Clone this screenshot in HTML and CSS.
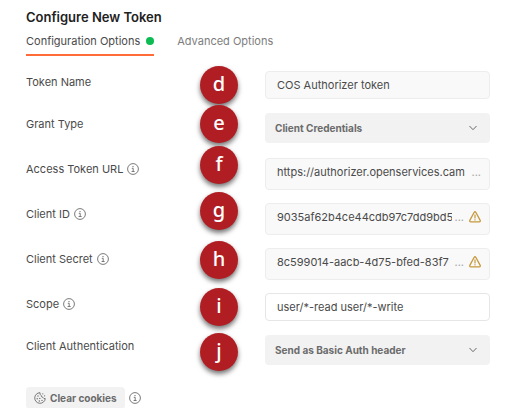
FILE: index.html
```html
<!DOCTYPE html>
<html lang="en">
<head>
  <meta charset="UTF-8" />
  <meta name="viewport" content="width=device-width, initial-scale=1" />
  <title>Configure New Token</title>
  <link rel="stylesheet" href="styles.css">
</head>
<body>
  <svg class="sprite" aria-hidden="true">
    <symbol id="info" viewBox="0 0 12 12">
      <circle cx="6" cy="6" r="5.4" fill="none" stroke="currentColor" stroke-width="0.9" />
      <path d="M4.8 5.3H6.2V8.4M4.6 8.5H7.6" fill="none" stroke="currentColor" stroke-width="0.9" />
      <circle cx="6" cy="3.6" r="0.7" fill="currentColor" />
    </symbol>
    <symbol id="warning" viewBox="0 0 12 12">
      <path d="M5.2 1.3Q6 0.2 6.8 1.3L11.2 9.4Q11.6 10.9 10.3 10.9H1.7Q0.4 10.9 0.8 9.4Z" fill="none" stroke="currentColor" stroke-width="1.3" stroke-linejoin="round" />
      <path d="M6 3.6V7.4M6 8.2V9.5" fill="none" stroke="currentColor" stroke-width="1.2" />
    </symbol>
    <symbol id="chevron" viewBox="0 0 10 6">
      <path d="M1.5 1L5 4.7L8.5 1" fill="none" stroke="currentColor" stroke-width="1" />
    </symbol>
    <symbol id="cookie" viewBox="0 0 12 12">
      <path d="M6 0.7A5.3 5.3 0 1 0 11.3 6.6Q9.7 7 9 5.4Q7.2 5.2 7.2 3.5Q5.7 2.6 6 0.7Z" fill="none" stroke="currentColor" stroke-width="0.9" stroke-linejoin="round" />
      <g fill="currentColor">
        <circle cx="4" cy="4" r="0.7" />
        <circle cx="3.2" cy="6.8" r="0.7" />
        <circle cx="5.8" cy="6.4" r="0.7" />
        <circle cx="5.3" cy="9" r="0.7" />
        <circle cx="8" cy="8.4" r="0.7" />
        <circle cx="8.8" cy="1.8" r="0.6" />
        <circle cx="10.6" cy="3.8" r="0.6" />
      </g>
    </symbol>
  </svg>

  <main class="panel">
    <h1 class="title">Configure New Token</h1>

    <nav class="tabs">
      <a class="tab active" href="#configuration">Configuration Options<span class="dot"></span></a>
      <a class="tab" href="#advanced">Advanced Options</a>
    </nav>

    <form class="form" id="configuration">
      <div class="row short">
        <label class="label" for="tokenName">Token Name</label>
        <div class="field text-field">
          <input type="text" id="tokenName" value="COS Authorizer token" />
        </div>
      </div>

      <div class="row">
        <label class="label" for="grantType">Grant Type</label>
        <div class="field select-field">
          <select id="grantType">
            <option>Client Credentials</option>
          </select>
          <svg class="chevron"><use href="#chevron" /></svg>
        </div>
      </div>

      <div class="row">
        <label class="label" for="tokenUrl">Access Token URL <svg class="icon"><use href="#info" /></svg></label>
        <div class="field text-field tall">
          <input type="text" id="tokenUrl" value="https://authorizer.openservices.cam" />
          <span class="more">...</span>
        </div>
      </div>

      <div class="row">
        <label class="label" for="clientId">Client ID <svg class="icon"><use href="#info" /></svg></label>
        <div class="field text-field tall">
          <input type="text" id="clientId" value="9035af62b4ce44cdb97c7dd9bd5" />
          <span class="more">...</span>
          <svg class="icon warning"><use href="#warning" /></svg>
        </div>
      </div>

      <div class="row">
        <label class="label" for="clientSecret">Client Secret <svg class="icon"><use href="#info" /></svg></label>
        <div class="field text-field tall">
          <input type="text" id="clientSecret" value="8c599014-aacb-4d75-bfed-83f7" />
          <span class="more">...</span>
          <svg class="icon warning"><use href="#warning" /></svg>
        </div>
      </div>

      <div class="row short">
        <label class="label" for="scope">Scope <svg class="icon"><use href="#info" /></svg></label>
        <div class="field text-field plain">
          <input type="text" id="scope" value="user/*-read user/*-write" />
        </div>
      </div>

      <div class="row">
        <label class="label" for="clientAuth">Client Authentication</label>
        <div class="field select-field">
          <select id="clientAuth">
            <option>Send as Basic Auth header</option>
          </select>
          <svg class="chevron"><use href="#chevron" /></svg>
        </div>
      </div>

      <div class="actions">
        <button class="clear" type="button"><svg class="icon"><use href="#cookie" /></svg>Clear cookies</button>
        <svg class="icon"><use href="#info" /></svg>
      </div>
    </form>

    <!-- step markers laid over the form -->
    <span class="step step-d">d</span>
    <span class="step step-e">e</span>
    <span class="step step-f">f</span>
    <span class="step step-g">g</span>
    <span class="step step-h">h</span>
    <span class="step step-i">i</span>
    <span class="step step-j">j</span>
  </main>
</body>
</html>
```
FILE: styles.css
```css
* {
  box-sizing: border-box;
}

body {
  margin: 0;
  background: #fff;
  color: #4a4a4a;
  font-family: Inter, "Liberation Sans", sans-serif;
  font-size: 11px;
}

.sprite {
  display: none;
}

.panel {
  position: relative;
  padding: 7px 22px 0 26px;
}

.title {
  margin: 0;
  font-size: 13px;
  font-weight: 600;
  line-height: 20px;
  color: #212121;
}

.tabs {
  display: flex;
  gap: 23px;
  margin-bottom: 15px;
}

.tab {
  display: flex;
  align-items: center;
  gap: 6px;
  height: 29px;
  padding-top: 1px;
  border-bottom: 2px solid transparent;
  color: #7d7d7d;
  text-decoration: none;
}

.tab.active {
  color: #4a4a4a;
  border-bottom-color: #ff6c37;
}

.dot {
  width: 8px;
  height: 8px;
  border-radius: 50%;
  background: #0cbb52;
}

.row {
  display: flex;
  align-items: flex-start;
  min-height: 45px;
}

.row.short {
  min-height: 42px;
}

.label {
  display: flex;
  align-items: center;
  gap: 4px;
  flex: 0 0 239px;
  line-height: 22px;
}

.icon {
  flex: none;
  width: 12px;
  height: 12px;
  color: #6b6b6b;
}

.field {
  display: flex;
  align-items: center;
  flex: 1;
  min-width: 0;
  border-radius: 4px;
}

.text-field {
  height: 28px;
  padding: 0 8px 0 11px;
  background: #f9f9f9;
  border: 1px solid #ededed;
}

.text-field.tall {
  height: 32px;
  padding-bottom: 5px;
}

.text-field.plain {
  background: #fff;
  border-color: #e6e6e6;
}

.text-field input {
  flex: 1;
  min-width: 0;
  height: 14px;
  padding: 0;
  border: none;
  outline: none;
  background: transparent;
  font: inherit;
  line-height: 14px;
  color: #4a4a4a;
}

.more {
  margin-left: 2px;
  line-height: 14px;
  color: #a6a6a6;
}

.warning {
  margin-left: 5px;
  color: #c59a3c;
}

.select-field {
  position: relative;
  height: 30px;
  background: #f2f2f2;
}

.select-field select {
  width: 100%;
  height: 100%;
  padding: 0 28px 0 10px;
  border: none;
  outline: none;
  background: transparent;
  appearance: none;
  font: inherit;
  font-size: 10px;
  font-weight: 700;
  color: #6b6b6b;
}

.chevron {
  position: absolute;
  top: 12px;
  right: 12px;
  width: 10px;
  height: 6px;
  color: #6b6b6b;
  pointer-events: none;
}

.actions {
  display: flex;
  align-items: center;
  gap: 4px;
  padding-top: 7px;
}

.clear {
  display: flex;
  align-items: center;
  gap: 4px;
  height: 22px;
  padding: 0 8px;
  border: none;
  border-radius: 4px;
  background: #f2f2f2;
  font: inherit;
  font-size: 10px;
  font-weight: 700;
  color: #6b6b6b;
}

.step {
  position: absolute;
  left: 200px;
  width: 38px;
  height: 38px;
  border-radius: 50%;
  background: #b01e24;
  box-shadow: 0 3px 5px rgba(0, 0, 0, 0.55);
  font-family: "Noto Sans", "Open Sans", sans-serif;
  font-size: 20px;
  font-weight: 500;
  line-height: 36px;
  text-align: center;
  color: #fff;
}

.step-d { top: 66px; }
.step-e { top: 105px; }
.step-f { top: 146px; }
.step-g { top: 192px; }
.step-h { top: 241px; }
.step-i { top: 288px; }
.step-j { top: 333px; }
```
